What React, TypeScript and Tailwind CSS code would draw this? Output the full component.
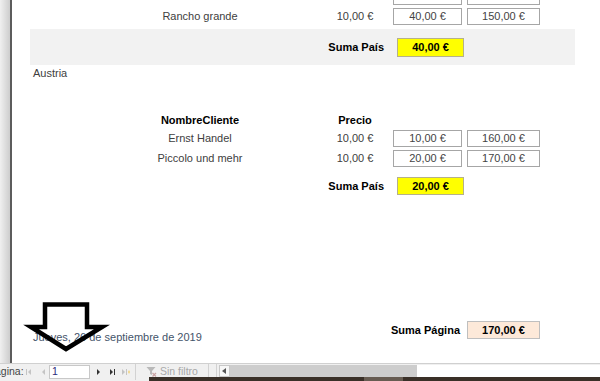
import React from 'react';

const font = { fontFamily: '"Liberation Sans", Arial, sans-serif' };

function Box({ value, w }: { value: string; w: string }) {
  return (
    <div className={`${w} h-[17px] border border-[#a6a6a6] bg-white flex items-center justify-center text-[#444]`}>
      {value}
    </div>
  );
}

function Row({ name, price, a, b, className = '' }: { name: string; price: string; a: string; b: string; className?: string }) {
  return (
    <div className={`flex h-[20px] items-start ${className}`}>
      <div className="ml-[118px] w-[140px] h-[17px] flex items-center justify-center text-[#404040]">{name}</div>
      <div className="ml-[50px] w-[70px] h-[17px] flex items-center justify-center text-[#404040]">{price}</div>
      <div className="ml-[3px]">
        <Box value={a} w="w-[69px]" />
      </div>
      <div className="ml-[5px]">
        <Box value={b} w="w-[73px]" />
      </div>
    </div>
  );
}

function Tri({ dir, bar, color }: { dir: 'l' | 'r'; bar?: boolean; color: string }) {
  return (
    <svg width="8" height="8" viewBox="0 0 8 8">
      {dir === 'l' ? (
        <>
          {bar && <rect x="1" y="1" width="1" height="6" fill={color} />}
          <path d="M6 1 L3 4 L6 7 Z" fill={color} />
        </>
      ) : (
        <>
          <path d="M2 1 L5 4 L2 7 Z" fill={color} />
          {bar && <rect x="6" y="1" width="1" height="6" fill={color} />}
        </>
      )}
    </svg>
  );
}

export default function App() {
  return (
    <div className="relative w-[600px] h-[381px] overflow-hidden bg-white text-[11px]" style={font}>
      {/* report area */}
      <div className="flex h-[363px]">
        <div className="w-[10px] bg-gradient-to-r from-[#f0f0f0] to-[#cdcdcd]" />
        <div className="w-[2px] bg-[#5c5c5c]" />
        <div className="flex-1 flex flex-col">
          <Row name="" price="" a="" b="" className="-mt-[12px]" />
          <Row name="Rancho grande" price="10,00 €" a="40,00 €" b="150,00 €" />
          <div className="ml-[18px] mt-[1px] w-[545px] h-[36px] bg-[#f2f2f2] flex items-center">
            <div className="w-[354px] text-right font-bold text-black">Suma País</div>
            <div className="ml-[13px] w-[67px] h-[19px] bg-[#ffff00] border border-[#b5b18a] flex items-center justify-center font-bold text-black">
              40,00 €
            </div>
          </div>
          <div className="h-[16px] pl-[21px] flex items-center text-[#404040]">Austria</div>
          <div className="mt-[29px] flex h-[20px] items-center font-bold text-black">
            <div className="ml-[118px] w-[140px] text-center">NombreCliente</div>
            <div className="ml-[50px] w-[70px] text-center">Precio</div>
          </div>
          <Row name="Ernst Handel" price="10,00 €" a="10,00 €" b="160,00 €" />
          <Row name="Piccolo und mehr" price="10,00 €" a="20,00 €" b="170,00 €" />
          <div className="mt-[7px] flex h-[18px] items-center">
            <div className="w-[372px] text-right font-bold text-black">Suma País</div>
            <div className="ml-[13px] w-[67px] h-[18px] bg-[#ffff00] border border-[#b5b18a] flex items-center justify-center font-bold text-black">
              20,00 €
            </div>
          </div>
          <div className="mt-[126px] flex items-start">
            <div className="w-[364px] pl-[21px] pt-[8px] text-[#44546a]">Jueves, 26 de septiembre de 2019</div>
            <div className="w-[84px] h-[18px] flex items-center justify-end font-bold text-black">Suma Página</div>
            <div className="ml-[7px] w-[73px] h-[18px] bg-[#fde9d9] border border-[#bfbfbf] flex items-center justify-center font-bold text-black">
              170,00 €
            </div>
          </div>
        </div>
      </div>

      {/* navigation bar */}
      <div className="relative h-[18px] border-t border-[#d0d0d0] bg-[#f0f0f0] flex items-start text-[10.5px]">
        <div className="-ml-[12px] w-[34px] h-[15px] flex items-center text-[#444]">Página:</div>
        <div className="ml-[3px] h-[15px] flex items-center gap-[6px]">
          <Tri dir="l" bar color="#c4c4c4" />
          <Tri dir="l" color="#c4c4c4" />
        </div>
        <div className="ml-[2px] mt-[1px] w-[41px] h-[14px] bg-white border border-[#c8c8c8] pl-[2px] flex items-center text-[#2b2a7a]">1</div>
        <div className="ml-[5px] h-[15px] flex items-center gap-[5px]">
          <Tri dir="r" color="#333" />
          <Tri dir="r" bar color="#333" />
          <svg width="10" height="8" viewBox="0 0 10 8">
            <path d="M1 1 L4 4 L1 7 Z" fill="#c4c4c4" />
            <rect x="5" y="1" width="1" height="6" fill="#c4c4c4" />
            <path d="M8 2 L9 4 L8 6 L7 4 Z" fill="#f2d27a" />
          </svg>
        </div>
        <div className="ml-[4px] w-px h-[16px] bg-[#d2d2d2]" />
        <div className="ml-[10px] h-[15px] flex items-center">
          <svg width="11" height="11" viewBox="0 0 11 11">
            <path d="M0.5 1 H9.5 L6 5 V9 L4 8 V5 Z" fill="#b9b9b9" />
            <path d="M6.5 7 L10 10.5 M10 7 L6.5 10.5" stroke="#c9a3a3" strokeWidth="1.2" />
          </svg>
          <span className="ml-[3px] text-[#a8a8a8]">Sin filtro</span>
        </div>
        <div className="ml-[10px] w-px h-[16px] bg-[#d2d2d2]" />
        <div className="ml-[7px] w-px h-[16px] bg-[#d2d2d2]" />
        <div className="ml-[2px] mt-[1px] w-[11px] h-[12px] bg-[#f7f7f7] border border-[#c8c8c8] flex items-center justify-center">
          <svg width="5" height="6" viewBox="0 0 5 6">
            <path d="M4 0 L0 3 L4 6 Z" fill="#555" />
          </svg>
        </div>
        <div className="mt-[1px] w-[187px] h-[12px] bg-[#cdcdcd]" />
        <div className="mt-[1px] flex-1 h-[12px] bg-white" />
        <div className="absolute left-[149px] right-0 bottom-0 h-[4px] bg-[#3a3028] flex">
          <div className="ml-[215px] w-[39px] h-full bg-[#675c52]" />
        </div>
      </div>

      {/* arrow annotation drawn over the report */}
      <svg className="absolute left-0 top-0 pointer-events-none" width="600" height="381">
        <path
          d="M45 304.5 H87 V327 H102 L66 349 L31 327 H45 Z"
          fill="none"
          stroke="#000"
          strokeWidth="4.5"
          strokeLinejoin="miter"
        />
      </svg>
    </div>
  );
}
